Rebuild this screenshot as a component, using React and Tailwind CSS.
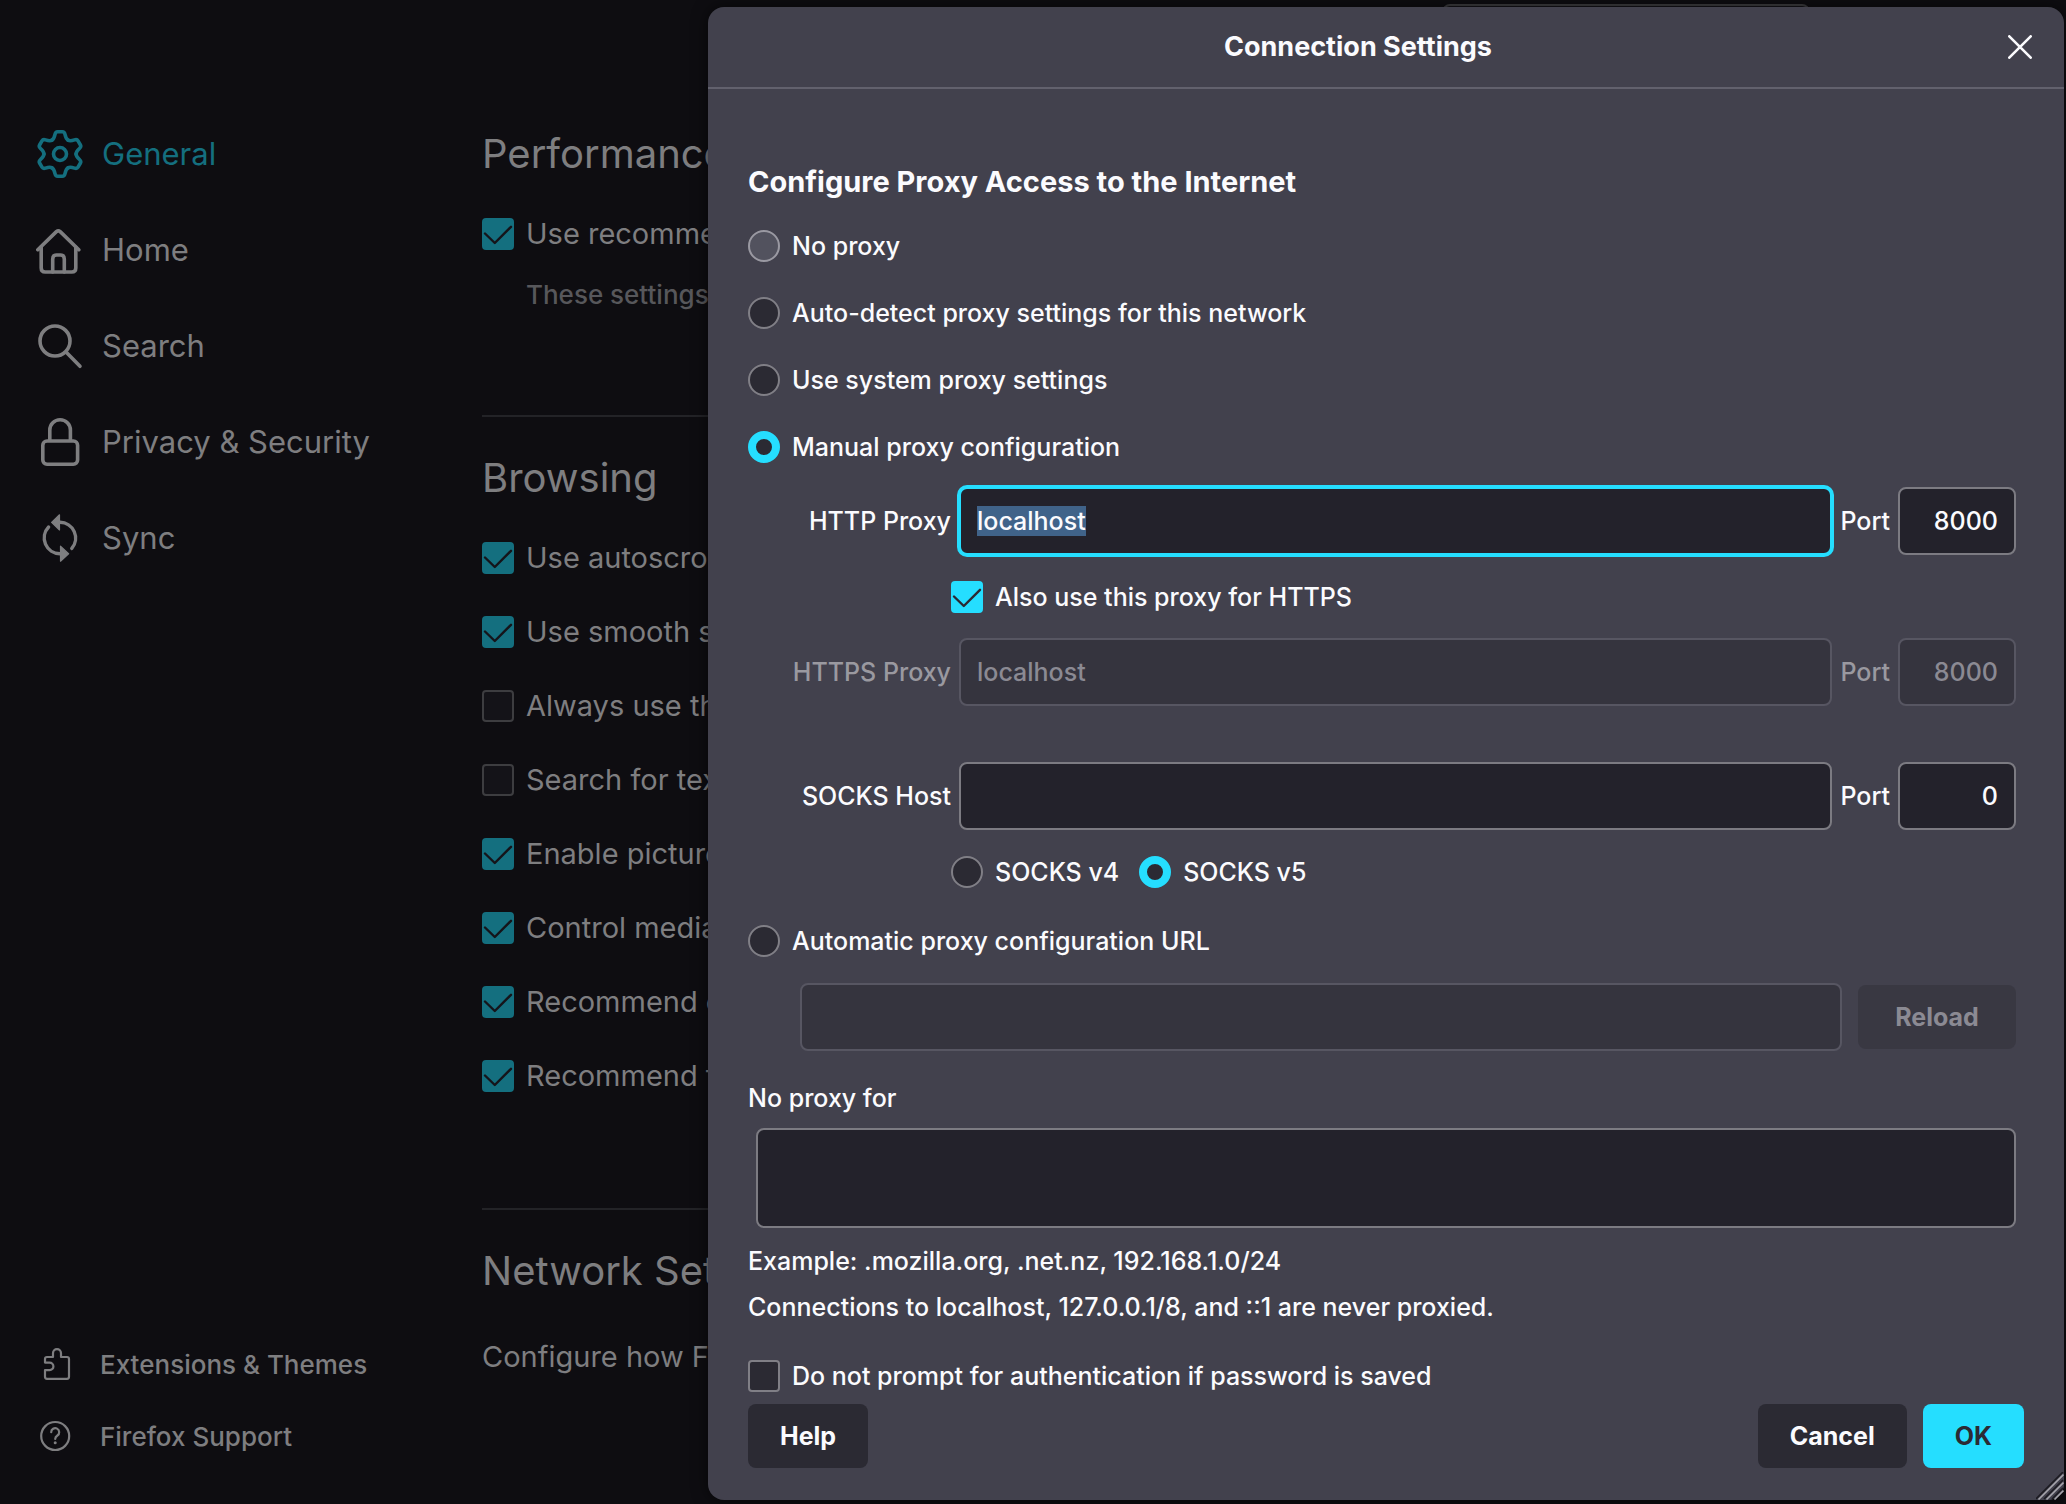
import React, { useEffect, useRef, useState } from 'react';

const GearIcon = () => (
    <svg width="48" height="48" viewBox="-24 -24 48 48" fill="none" stroke="currentColor" strokeWidth="3.6" strokeLinecap="round" strokeLinejoin="round">
        <circle r="6.5" />
        {[0, 60, 120, 180, 240, 300].map((angle) => (
            <path
                key={angle}
                transform={`rotate(${angle})`}
                d="M-8 -13.9C-6.2 -14.9 -5.6 -16.8 -5 -19.6Q-4.4 -22.2 -2.4 -22.2H2.4Q4.4 -22.2 5 -19.6C5.6 -16.8 6.2 -14.9 8 -13.9"
            />
        ))}
    </svg>
);

const HomeIcon = () => (
    <svg width="48" height="48" viewBox="0 0 48 48" fill="none" stroke="currentColor" strokeWidth="3.6" strokeLinecap="round" strokeLinejoin="round">
        <path d="M1.8 23.7L20.4 5.6Q22.3 4 24.2 5.6L42.8 23.7" />
        <path d="M5.2 21V42Q5.2 46 9.2 46H35.8Q39.8 46 39.8 42V21" />
        <path d="M16.7 46V33Q16.7 29 20.5 29H24.5Q28.3 29 28.3 33V46" />
    </svg>
);

const SearchIcon = () => (
    <svg width="48" height="48" viewBox="0 0 48 48" fill="none" stroke="currentColor" strokeWidth="3.6" strokeLinecap="round">
        <circle cx="19" cy="19" r="15" />
        <path d="M30.5 30.5L44 44.3" />
    </svg>
);

const LockIcon = () => (
    <svg width="48" height="48" viewBox="0 0 48 48" fill="none" stroke="currentColor" strokeWidth="3.6">
        <rect x="6.8" y="23" width="34.8" height="23.2" rx="4.2" />
        <path d="M13.8 23V12.1a10.3 10.3 0 0 1 20.6 0V23" />
    </svg>
);

const SyncIcon = () => (
    <svg width="48" height="48" viewBox="0 0 48 48" fill="none" stroke="currentColor" strokeWidth="3.4" strokeLinecap="round">
        <path d="M24 8.3A15.8 15.8 0 0 1 35.8 34.4" />
        <path d="M24 39.7A15.8 15.8 0 0 1 12.6 13" />
        <path d="M23.5 .8V16L15.6 8.4ZM24.5 32.2V47.2L32.6 39.7Z" fill="currentColor" strokeWidth="1.2" strokeLinejoin="round" />
    </svg>
);

const PuzzleIcon = () => (
    <svg width="32" height="32" viewBox="0 0 32 32" fill="none" stroke="currentColor" strokeWidth="2.2" strokeLinejoin="round">
        <path d="M5 14.6V11a2 2 0 0 1 2-2H13V5.2a4 4 0 0 1 8 0V9H27a2 2 0 0 1 2 2V28.8a2 2 0 0 1-2 2H7a2 2 0 0 1-2-2V22.2H9.6a3.8 3.8 0 0 0 0-7.6Z" />
    </svg>
);

const HelpIcon = () => (
    <svg width="32" height="32" viewBox="0 0 32 32" fill="none" stroke="currentColor" strokeWidth="2.2" strokeLinecap="round">
        <circle cx="15.2" cy="16" r="14" />
        <path d="M11.2 12.2a4 4 0 1 1 6.2 3.3c-1.5 1-2.2 1.6-2.2 3.4" />
        <circle cx="15.2" cy="22.8" r="1.5" fill="currentColor" stroke="none" />
    </svg>
);

const categories = [
    { name: 'General', icon: GearIcon, active: true },
    { name: 'Home', icon: HomeIcon },
    { name: 'Search', icon: SearchIcon },
    { name: 'Privacy & Security', icon: LockIcon },
    { name: 'Sync', icon: SyncIcon }
];

const browsingOptions = [
    { id: 'autoscroll', label: 'Use autoscrolling', checked: true },
    { id: 'smooth', label: 'Use smooth scrolling', checked: true },
    { id: 'cursor', label: 'Always use the', checked: false },
    { id: 'typing', label: 'Search for text', checked: false },
    { id: 'pip', label: 'Enable picture', checked: true },
    { id: 'media', label: 'Control media', checked: true },
    { id: 'extensions', label: 'Recommend extensions', checked: true },
    { id: 'features', label: 'Recommend features', checked: true }
];

const CheckMark = ({ className }) => (
    <svg viewBox="0 0 32 32" className={`pointer-events-none col-start-1 row-start-1 size-8 ${className}`} fill="none" stroke="currentColor" strokeWidth="2.4" strokeLinecap="round" strokeLinejoin="round">
        <path d="M3 15.5L12.8 25L29 8.8" />
    </svg>
);

// Checkbox on the dimmed page behind the dialog
const PageCheckbox = ({ id, label, defaultChecked }) => (
    <div className="flex h-8 items-center gap-3">
        <span className="grid shrink-0">
            <input
                id={id}
                type="checkbox"
                defaultChecked={defaultChecked}
                className="peer col-start-1 row-start-1 size-8 appearance-none rounded-sm border-2 border-[#3d3d40] bg-[#141318] checked:border-[#146f7f] checked:bg-[#146f7f]"
            />
            <CheckMark className="invisible text-[#15141a] peer-checked:visible" />
        </span>
        <label htmlFor={id} className="text-[29px] leading-8">{label}</label>
    </div>
);

const Checkbox = ({ id, label, checked, onChange }) => (
    <div className="flex h-8 items-center gap-3">
        <span className="grid shrink-0">
            <input
                id={id}
                type="checkbox"
                checked={checked}
                onChange={onChange}
                className="peer col-start-1 row-start-1 size-8 appearance-none rounded-sm border-2 border-[#807f86] bg-[#2b2a33] checked:border-[#25deff] checked:bg-[#25deff]"
            />
            <CheckMark className="invisible text-[#2b2a33] peer-checked:visible" />
        </span>
        <label htmlFor={id}>{label}</label>
    </div>
);

const Radio = ({ id, name, label, checked, onChange, hovered }) => (
    <div className="flex h-8 items-center gap-3">
        <input
            id={id}
            type="radio"
            name={name}
            checked={checked}
            onChange={onChange}
            className={`size-8 shrink-0 appearance-none rounded-full border-2 checked:border-8 checked:border-[#25deff] ${hovered ? 'border-[#9a99a2] bg-[#52525e]' : 'border-[#807f86] bg-[#2b2a33]'}`}
        />
        <label htmlFor={id}>{label}</label>
    </div>
);

const fieldClass = 'h-[68px] w-full min-w-0 rounded-lg border-2 border-[#7c7b82] bg-[#23222b] px-4 outline-none focus:border-[#25deff] focus:ring-2 focus:ring-[#25deff] selection:bg-[#40638afe] selection:text-[#fbfbfe] disabled:border-[#575662] disabled:bg-[#35343e] disabled:text-[#8b8a93]';

const ProxyRow = ({ id, label, host, port, disabled, inputRef }) => (
    <div className="grid grid-cols-[159px_1fr_auto_118px] items-center gap-x-2 pl-11">
        <label htmlFor={id} className={`text-right whitespace-nowrap ${disabled ? 'text-[#9a99a0]' : ''}`}>{label}</label>
        <input id={id} ref={inputRef} type="text" defaultValue={host} disabled={disabled} className={fieldClass} />
        <label htmlFor={`${id}-port`} className={disabled ? 'text-[#9a99a0]' : ''}>Port</label>
        <input id={`${id}-port`} type="text" defaultValue={port} disabled={disabled} className={`${fieldClass} text-right`} />
    </div>
);

const Sidebar = () => (
    <aside className="flex w-[482px] shrink-0 flex-col pt-[130px] pb-[52px] pl-9">
        <nav className="flex flex-col gap-12">
            {categories.map(({ name, icon: Icon, active }) => (
                <a key={name} href="#" className={`flex h-12 items-center gap-[18px] text-[31px] ${active ? 'text-[#146f7f]' : ''}`}>
                    <Icon />
                    {name}
                </a>
            ))}
        </nav>
        <div className="mt-auto flex flex-col gap-10 pl-1 text-[26px] font-medium">
            <a href="#" className="flex h-8 items-center gap-7">
                <PuzzleIcon />
                Extensions & Themes
            </a>
            <a href="#" className="flex h-8 items-center gap-7">
                <HelpIcon />
                Firefox Support
            </a>
        </div>
    </aside>
);

const Preferences = () => (
    <main className="min-w-0 flex-1 overflow-hidden pr-16 whitespace-nowrap">
        <div className="mb-[50px] flex h-20 justify-end pt-1">
            <input type="search" aria-label="Find in Settings" className="mr-48 h-16 w-[368px] rounded-lg border-2 border-[#3d3d40] bg-[#141318]" />
        </div>
        <section>
            <h2 className="text-[40px] leading-12">Performance</h2>
            <div className="mt-10">
                <PageCheckbox id="recommended" label="Use recommended" defaultChecked />
            </div>
            <p className="mt-[29px] pl-11 text-[26px] leading-8 font-medium text-[#57575b]">These settings are</p>
        </section>
        <section className="mt-[104px] border-t-2 border-[#232327] pt-[37px]">
            <h2 className="text-[40px] leading-12">Browsing</h2>
            <div className="mt-10 flex flex-col gap-[42px]">
                {browsingOptions.map((option) => (
                    <PageCheckbox key={option.id} id={option.id} label={option.label} defaultChecked={option.checked} />
                ))}
            </div>
        </section>
        <section className="mt-[116px] border-t-2 border-[#232327] pt-[37px]">
            <h2 className="text-[40px] leading-12">Network Settings</h2>
            <p className="mt-[46px] text-[29px] leading-8">Configure how Firefox</p>
        </section>
    </main>
);

const buttonClass = 'h-16 rounded-lg px-8 text-[25px] font-bold';

const ConnectionDialog = () => {
    const httpRef = useRef(null);
    const [mode, setMode] = useState('manual');
    const [socks, setSocks] = useState('5');
    const [shareProxy, setShareProxy] = useState(true);
    const [noPrompt, setNoPrompt] = useState(false);

    useEffect(() => {
        httpRef.current.focus();
        httpRef.current.select();
    }, []);

    return (
        <div role="dialog" aria-labelledby="dialog-title" className="relative min-w-0 flex-1 self-start rounded-2xl bg-[#42414d] pb-8 text-[25px] leading-8 font-medium text-[#fbfbfe] shadow-[0_0_16px_rgba(0,0,0,0.6)]">
            <header className="flex h-[82px] items-center border-b-2 border-[#62616d] pr-8">
                <h1 id="dialog-title" className="flex-1 text-center text-[27px] font-bold">Connection Settings</h1>
                <button type="button" aria-label="Close">
                    <svg width="24" height="24" viewBox="0 0 24 24" fill="none" stroke="currentColor" strokeWidth="2.6" strokeLinecap="round">
                        <path d="M1.3 1.3L22.7 22.7M22.7 1.3L1.3 22.7" />
                    </svg>
                </button>
            </header>

            <div className="pt-[75px] pr-12 pl-10">
                <h2 className="text-[29px] leading-9 font-bold">Configure Proxy Access to the Internet</h2>
                <div className="mt-[30px] flex flex-col gap-[35px]">
                    <Radio id="none" name="mode" label="No proxy" hovered checked={mode === 'none'} onChange={() => setMode('none')} />
                    <Radio id="detect" name="mode" label="Auto-detect proxy settings for this network" checked={mode === 'detect'} onChange={() => setMode('detect')} />
                    <Radio id="system" name="mode" label="Use system proxy settings" checked={mode === 'system'} onChange={() => setMode('system')} />
                    <Radio id="manual" name="mode" label="Manual proxy configuration" checked={mode === 'manual'} onChange={() => setMode('manual')} />
                </div>

                <div className="mt-6">
                    <ProxyRow id="http" label="HTTP Proxy" host="localhost" port="8000" inputRef={httpRef} />
                    <div className="mt-[26px] mb-[25px] pl-[203px]">
                        <Checkbox id="share" label="Also use this proxy for HTTPS" checked={shareProxy} onChange={() => setShareProxy(!shareProxy)} />
                    </div>
                    <ProxyRow id="https" label="HTTPS Proxy" host="localhost" port="8000" disabled={shareProxy} />
                    <div className="mt-14">
                        <ProxyRow id="socks" label="SOCKS Host" host="" port="0" />
                    </div>
                    <div className="mt-[26px] flex gap-5 pl-[203px]">
                        <Radio id="socks4" name="socks" label="SOCKS v4" checked={socks === '4'} onChange={() => setSocks('4')} />
                        <Radio id="socks5" name="socks" label="SOCKS v5" checked={socks === '5'} onChange={() => setSocks('5')} />
                    </div>
                </div>

                <div className="mt-[37px]">
                    <Radio id="auto" name="mode" label="Automatic proxy configuration URL" checked={mode === 'auto'} onChange={() => setMode('auto')} />
                </div>
                <div className="mt-[26px] flex items-center gap-4 pl-[52px]">
                    <input type="text" aria-label="Automatic proxy configuration URL" disabled={mode !== 'auto'} className={fieldClass} />
                    <button type="button" disabled={mode !== 'auto'} className={`${buttonClass} w-[158px] shrink-0 bg-[#2b2a33] disabled:bg-[#393842] disabled:text-[#8b8a93]`}>Reload</button>
                </div>

                <label htmlFor="exceptions" className="mt-[31px] block">No proxy for</label>
                <div className="mt-3.5 pl-2">
                    <textarea id="exceptions" className="block h-[100px] w-full resize-none rounded-lg border-2 border-[#7c7b82] bg-[#23222b] px-4 py-2 outline-none" />
                </div>
                <p className="mt-[17px]">Example: .mozilla.org, .net.nz, 192.168.1.0/24</p>
                <p className="mt-3.5">Connections to localhost, 127.0.0.1/8, and ::1 are never proxied.</p>
                <div className="mt-[37px]">
                    <Checkbox id="noprompt" label="Do not prompt for authentication if password is saved" checked={noPrompt} onChange={() => setNoPrompt(!noPrompt)} />
                </div>
            </div>

            <footer className="mt-3 flex gap-4 px-10">
                <button type="button" className={`${buttonClass} mr-auto bg-[#2b2a33]`}>Help</button>
                <button type="button" className={`${buttonClass} bg-[#2b2a33]`}>Cancel</button>
                <button type="button" className={`${buttonClass} bg-[#25deff] text-[#2b2a33]`}>OK</button>
            </footer>

            {/* resize grip */}
            <svg width="28" height="28" viewBox="0 0 28 28" className="absolute right-0 bottom-0" fill="none" strokeWidth="1.6">
                <path d="M0 27L27 0M8 27L27 8M16 27L27 16" stroke="#1c1b22" />
                <path d="M2.5 27.5L27.5 2.5M10.5 27.5L27.5 10.5M18.5 27.5L27.5 18.5" stroke="#a5a4ab" />
            </svg>
        </div>
    );
};

const App = () => {
    return (
        <div className="relative min-h-screen overflow-hidden bg-[#0e0d11] font-['Inter',sans-serif] text-[#7e7e80]">
            <div className="flex min-h-screen">
                <Sidebar />
                <Preferences />
            </div>
            <div className="absolute inset-0 flex pt-[7px] pr-0.5 pl-[708px]">
                <ConnectionDialog />
            </div>
        </div>
    );
};

export default App;
